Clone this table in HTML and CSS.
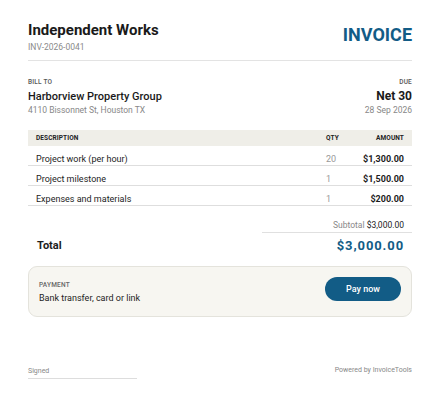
FILE: index.html
```html
<!DOCTYPE html>
<html>
<head>
<meta charset="utf-8">
<link rel="stylesheet" href="styles.css">
</head>
<body>
<div class="page">
  <header class="head">
    <div>
      <div class="brand">Independent Works</div>
      <div class="invno">INV-2026-0041</div>
    </div>
    <div class="doc-title">INVOICE</div>
  </header>

  <section class="parties">
    <div>
      <div class="label">BILL TO</div>
      <div class="strong">Harborview Property Group</div>
      <div class="muted">4110 Bissonnet St, Houston TX</div>
    </div>
    <div class="right">
      <div class="label">DUE</div>
      <div class="strong big">Net 30</div>
      <div class="muted">28 Sep 2026</div>
    </div>
  </section>

  <table class="items">
    <thead>
      <tr><th class="c-desc">DESCRIPTION</th><th class="c-qty">QTY</th><th class="c-amt">AMOUNT</th></tr>
    </thead>
    <tbody>
      <tr><td class="c-desc">Project work (per hour)</td><td class="c-qty">20</td><td class="c-amt">$1,300.00</td></tr>
      <tr><td class="c-desc">Project milestone</td><td class="c-qty">1</td><td class="c-amt">$1,500.00</td></tr>
      <tr><td class="c-desc">Expenses and materials</td><td class="c-qty">1</td><td class="c-amt">$200.00</td></tr>
    </tbody>
  </table>

  <div class="subtotal"><span class="sub-l">Subtotal</span> <span>$3,000.00</span></div>
  <div class="total"><span class="total-l">Total</span><span class="total-v">$3,000.00</span></div>

  <div class="payment">
    <div>
      <div class="label pay-label">PAYMENT</div>
      <div class="pay-text">Bank transfer, card or link</div>
    </div>
    <button class="pay-btn">Pay now</button>
  </div>

  <footer class="foot">
    <div class="signed">Signed</div>
    <div class="powered">Powered by InvoiceTools</div>
  </footer>
</div>
</body>
</html>
```

FILE: styles.css
```css
* { box-sizing: border-box; }
html, body { margin: 0; padding: 0; background: #fff; }
body { font-family: Roboto, "Noto Sans", sans-serif; color: #1d1d1d; }
.page { width: 440px; padding: 20px 28px 0; }

.head { display: flex; justify-content: space-between; align-items: flex-start; padding-bottom: 7px; border-bottom: 1px solid #e3e3e3; }
.brand { font-size: 15px; font-weight: 700; line-height: 20px; color: #1a1a1a; }
.invno { font-size: 8.5px; color: #8a8a8a; line-height: 12px; margin-top: 1px; }
.doc-title { font-size: 18px; font-weight: 700; color: #125c86; line-height: 22px; margin-top: 4px; }

.parties { display: flex; justify-content: space-between; margin-top: 16px; }
.right { text-align: right; }
.label { font-size: 6.5px; font-weight: 500; color: #555; letter-spacing: 0.2px; line-height: 10px; }
.strong { font-size: 11px; font-weight: 500; line-height: 15px; margin-top: 1.5px; color: #1a1a1a; }
.strong.big { font-size: 12px; font-weight: 700; }
.muted { font-size: 8.5px; color: #888; line-height: 13px; }

.items { width: 100%; border-collapse: collapse; margin-top: 13px; table-layout: fixed; }
.items th { background: #efeee8; font-size: 6.5px; font-weight: 700; color: #222; height: 16px; padding: 0 8px; text-align: left; letter-spacing: 0.1px; }
.items td { font-size: 9px; line-height: 12px; height: 19px; padding: 7px 8px 0; vertical-align: top; border-bottom: 1px solid #dedede; color: #1d1d1d; }
.items .c-qty { width: 34px; text-align: left; }
.items td.c-qty { color: #999; }
.items .c-amt { width: 60px; text-align: right; }
.items td.c-amt { font-weight: 700; }

.subtotal { margin-left: auto; width: 150px; text-align: right; font-size: 8.5px; line-height: 10px; padding: 14px 8px 2px 0; border-bottom: 1px solid #e0e0e0; color: #222; }
.sub-l { color: #888; }
.total { display: flex; justify-content: space-between; align-items: center; padding: 0 8px 0 9px; height: 25px; }
.total-l { font-size: 11px; font-weight: 700; }
.total-v { font-size: 13px; font-weight: 700; color: #125c86; letter-spacing: 0.9px; }

.payment { margin-top: 8px; display: flex; justify-content: space-between; align-items: center; background: #f7f6f1; border: 1px solid #e4e3dc; border-radius: 9px; padding: 0 10px 0 10px; height: 51px; }
.pay-label { color: #666; margin-bottom: 3px; }
.pay-text { font-size: 9px; color: #1d1d1d; }
.pay-btn { font-family: inherit; background: #125c86; color: #fff; border: 0; border-radius: 12px; width: 76px; height: 24px; font-size: 9px; font-weight: 500; margin-bottom: 4px; }

.foot { display: flex; justify-content: space-between; align-items: flex-start; margin-top: 48px; }
.signed { font-size: 7px; color: #888; width: 109px; border-bottom: 1px solid #ddd; padding-bottom: 2px; line-height: 10px; margin-top: 1px; }
.powered { font-size: 7px; color: #888; line-height: 10px; }
```
